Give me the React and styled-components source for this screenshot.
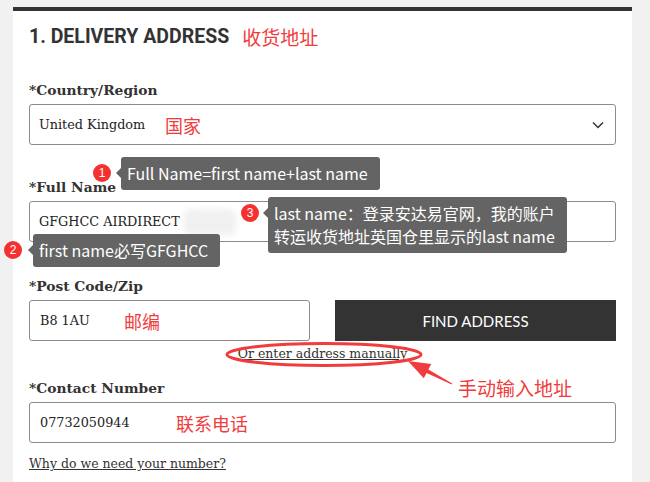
import React from "react";
import styled, { createGlobalStyle } from "styled-components";

const GlobalStyle = createGlobalStyle`
  body {
    margin: 0;
    background: #f1f1f1;
    font-family: "Liberation Sans", Arial, sans-serif;
  }
`;

const RED = "#f03c3c";

const Page = styled.div`
  padding: 7px 0 0 13px;
  width: 619px;
`;

const Card = styled.div`
  background: #fff;
  border-top: 4px solid #333;
  padding: 14px 16px 20px;
`;

const Heading = styled.h2`
  margin: 0 0 31px;
  display: flex;
  align-items: center;
  gap: 13px;
  font-family: Roboto, "Liberation Sans", sans-serif;
  font-weight: 700;
  font-size: 19.5px;
  line-height: 24px;
  color: #333;
`;

const Note = styled.span`
  font-family: "Noto Sans CJK SC", sans-serif;
  font-weight: 400;
  font-size: ${(p) => p.$size || 18}px;
  line-height: 24px;
  color: ${RED};
  white-space: nowrap;
`;

const Field = styled.div`
  position: relative;
  margin-bottom: ${(p) => (p.$mb != null ? p.$mb : 32)}px;
`;

const Label = styled.div`
  font-family: "DejaVu Serif", serif;
  font-weight: 700;
  font-size: 13.8px;
  line-height: 20px;
  color: #333;
  margin-bottom: 4px;
`;

const Box = styled.div`
  box-sizing: border-box;
  height: 41px;
  display: flex;
  align-items: center;
  padding: 0 11px 0 ${(p) => p.$pl || 10}px;
  border: 1px solid #8c8c8c;
  border-radius: 3px;
  font-family: "DejaVu Serif", serif;
  font-size: 12.8px;
  color: #222;
`;

const Value = styled.span`
  display: inline-block;
  min-width: ${(p) => p.$w || 0}px;
  white-space: nowrap;
`;

const Chevron = styled.svg`
  margin-left: auto;
`;

const Smudge = styled.span`
  display: inline-block;
  width: 52px;
  height: 26px;
  margin-left: 4px;
  background: #f0f0f0;
  border-radius: 6px;
  filter: blur(3px);
`;

const Tip = styled.div`
  position: absolute;
  left: ${(p) => p.$x}px;
  top: ${(p) => p.$y}px;
  display: flex;
  align-items: flex-start;
  z-index: 2;
`;

const Badge = styled.span`
  width: 18px;
  height: 18px;
  margin: 7px ${(p) => p.$gap || 10}px 0 0;
  border-radius: 50%;
  background: #f53030;
  color: #fff;
  font-family: "Liberation Sans", sans-serif;
  font-size: 12px;
  line-height: 18px;
  text-align: center;
`;

const Bubble = styled.div`
  position: relative;
  background: #646464;
  color: #fff;
  border-radius: 3px;
  padding: 5px 12px 5px 6px;
  font-family: "Noto Sans CJK SC", sans-serif;
  font-size: 16px;
  line-height: 23px;
  white-space: nowrap;

  &::before {
    content: "";
    position: absolute;
    left: -5px;
    top: 11px;
    border-top: 5px solid transparent;
    border-bottom: 5px solid transparent;
    border-right: 5px solid #646464;
  }
`;

const PostRow = styled.div`
  display: grid;
  grid-template-columns: 1fr 1fr;
  gap: 25px;
`;

const FindButton = styled.button`
  height: 41px;
  border: none;
  background: #333;
  color: #fff;
  font-family: Lato, "Liberation Sans", sans-serif;
  font-size: 15px;
  cursor: pointer;
`;

const LinkRow = styled.div`
  position: relative;
  height: 20px;
  margin: 3px 0 14px;
  text-align: center;
`;

const TextLink = styled.a`
  font-family: "DejaVu Serif", serif;
  font-size: 12.5px;
  line-height: 20px;
  color: #333;
  text-decoration: underline;
`;

const Callout = styled.svg`
  position: absolute;
  left: 0;
  top: 0;
  overflow: visible;
  pointer-events: none;
`;

const CalloutNote = styled(Note)`
  position: absolute;
  left: 429px;
  top: 32px;
  font-size: 19px;
`;

const Why = styled(TextLink)`
  display: inline-block;
  margin-top: 11px;
`;

export default function App() {
  return (
    <>
      <GlobalStyle />
      <Page>
        <Card>
          <Heading>
            1. DELIVERY ADDRESS <Note $size={19}>收货地址</Note>
          </Heading>

          <Field>
            <Label>*Country/Region</Label>
            <Box $pl={9}>
              <Value $w={126}>United Kingdom</Value>
              <Note>国家</Note>
              <Chevron width="12" height="8" viewBox="0 0 12 8">
                <path d="M1 1.5 L6 6.5 L11 1.5" fill="none" stroke="#333" strokeWidth="1.5" />
              </Chevron>
            </Box>
          </Field>

          <Field $mb={34}>
            <Label>*Full Name</Label>
            <Box $pl={9}>
              <Value>GFGHCC AIRDIRECT</Value>
              <Smudge />
            </Box>
            <Tip $x={64} $y={-20}>
              <Badge>1</Badge>
              <Bubble>Full Name=first name+last name</Bubble>
            </Tip>
            <Tip $x={212} $y={20}>
              <Badge $gap={9}>3</Badge>
              <Bubble>
                last name：登录安达易官网，我的账户
                <br />
                转运收货地址英国仓里显示的last name
              </Bubble>
            </Tip>
            <Tip $x={-25} $y={57}>
              <Badge $gap={11}>2</Badge>
              <Bubble>first name必写GFGHCC</Bubble>
            </Tip>
          </Field>

          <Field $mb={0}>
            <Label>*Post Code/Zip</Label>
            <PostRow>
              <Box>
                <Value $w={84}>B8 1AU</Value>
                <Note>邮编</Note>
              </Box>
              <FindButton>FIND ADDRESS</FindButton>
            </PostRow>
          </Field>

          <LinkRow>
            <TextLink href="#">Or enter address manually</TextLink>
            <Callout width="587" height="60">
              <ellipse cx="295" cy="10.5" rx="97" ry="11" fill="none" stroke={RED} strokeWidth="3" />
              <polygon
                points="379,17 402.2,20.1 399.4,25.4 423.2,39.6 422.8,40.4 397.6,29 394.8,34.3"
                fill={RED}
              />
            </Callout>
            <CalloutNote>手动输入地址</CalloutNote>
          </LinkRow>

          <Field $mb={0}>
            <Label>*Contact Number</Label>
            <Box>
              <Value $w={136}>07732050944</Value>
              <Note>联系电话</Note>
            </Box>
          </Field>

          <Why href="#">Why do we need your number?</Why>
        </Card>
      </Page>
    </>
  );
}
